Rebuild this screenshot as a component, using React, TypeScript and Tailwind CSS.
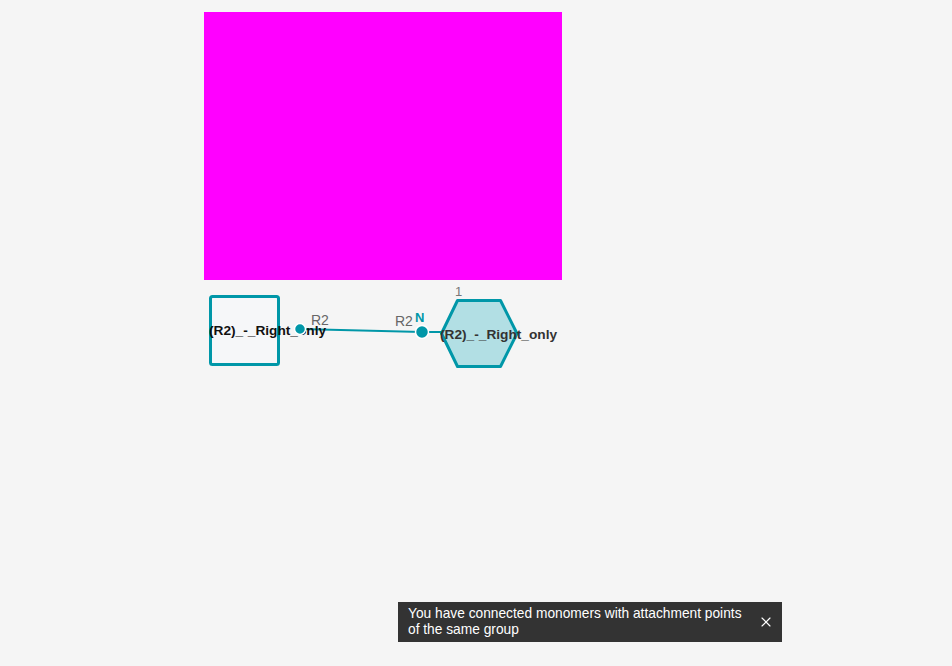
import { X } from 'lucide-react';

function Diagram() {
  // coordinates are page coords minus 280 on y
  const teal = '#0097a8';
  return (
    <svg width={952} height={110} className="block" style={{ fontFamily: '"Liberation Sans", Arial, sans-serif' }}>
      {/* bond */}
      <line x1={300} y1={49} x2={422} y2={52} stroke={teal} strokeWidth={2} />
      <line x1={422} y1={52} x2={444} y2={52} stroke={teal} strokeWidth={2} />

      {/* left monomer (square) */}
      <rect x={210.5} y={16.5} width={68} height={68} rx={2} fill="#f6f7f9" stroke={teal} strokeWidth={3} />
      <text x={209} y={55} fontSize={13.7} fontWeight={700} fill="#111">(R2)_-_Right_only</text>

      {/* right monomer (hexagon) */}
      <polygon points="441.5,53.5 457.5,20.5 500.5,20.5 517,53.5 500.5,86.5 457.5,86.5" fill="#b2dfe4" stroke={teal} strokeWidth={3} strokeLinejoin="round" />
      <text x={440} y={59} fontSize={13.7} fontWeight={700} fill="#333">(R2)_-_Right_only</text>

      {/* attachment points */}
      <circle cx={300} cy={49} r={5.5} fill={teal} stroke="#fff" strokeWidth={1.5} />
      <circle cx={422} cy={52} r={6.5} fill={teal} stroke="#fff" strokeWidth={1.5} />

      <text x={311} y={45} fontSize={14} fill="#666">R2</text>
      <text x={395} y={46} fontSize={14} fill="#666">R2</text>
      <text x={415} y={42} fontSize={13} fontWeight={700} fill={teal}>N</text>
      <text x={455} y={16} fontSize={13} fill="#777">1</text>
    </svg>
  );
}

export default function App() {
  return (
    <div className="relative w-[952px] h-[666px] bg-[#f5f5f5] overflow-hidden font-['Liberation_Sans',Arial,sans-serif]">
      <div className="pt-[12px] pl-[204px]">
        <div className="w-[358px] h-[268px] bg-[#ff00ff]" />
      </div>
      <Diagram />

      <div className="absolute left-[398px] top-[602px] w-[384px] h-[40px] bg-[#333333] flex items-center pl-[10px] pr-[8px]">
        <p className="w-[340px] text-[13.75px] leading-[16px] text-white -mt-[1px]">
          You have connected monomers with attachment points of the same group
        </p>
        <X size={16} strokeWidth={1.75} className="ml-auto text-white" />
      </div>
    </div>
  );
}
